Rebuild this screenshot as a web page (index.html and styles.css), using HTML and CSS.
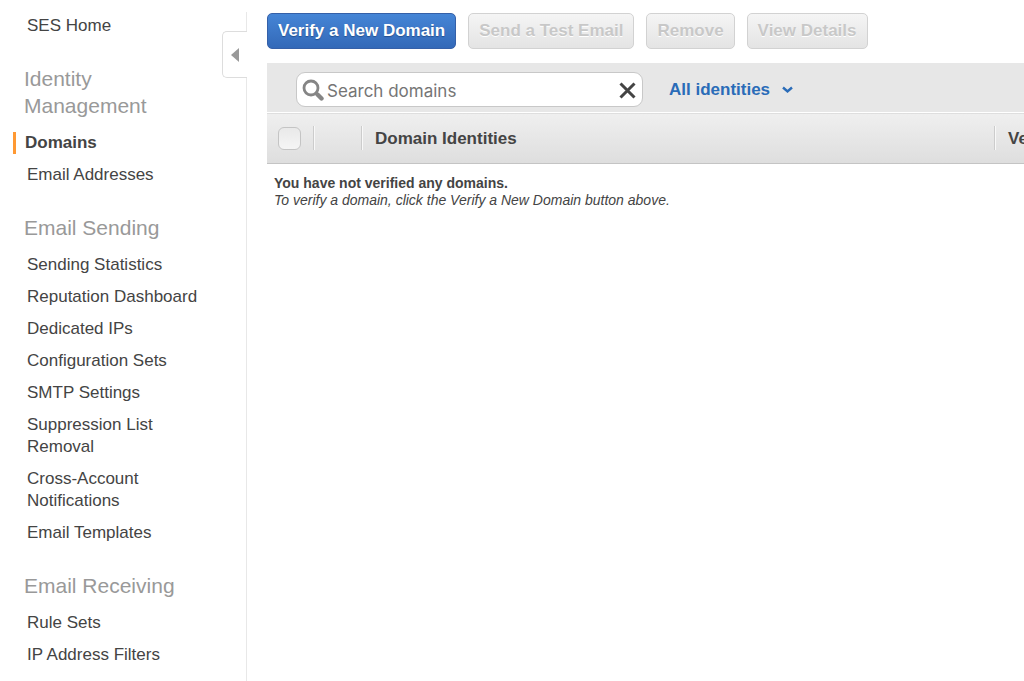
FILE: index.html
```html
<!DOCTYPE html>
<html lang="en">
<head>
  <meta charset="utf-8">
  <meta name="viewport" content="width=device-width, initial-scale=1">
  <title>SES Home</title>
  <link rel="stylesheet" href="styles.css">
</head>
<body>
  <div class="layout">
    <aside class="sidebar">
      <nav class="nav">
        <ul class="nav-list">
          <li><a class="nav-link" href="#">SES Home</a></li>
        </ul>
        <h2 class="nav-heading">Identity Management</h2>
        <ul class="nav-list">
          <li><a class="nav-link nav-link-active" href="#" aria-current="page">Domains</a></li>
          <li><a class="nav-link" href="#">Email Addresses</a></li>
        </ul>
        <h2 class="nav-heading">Email Sending</h2>
        <ul class="nav-list">
          <li><a class="nav-link" href="#">Sending Statistics</a></li>
          <li><a class="nav-link" href="#">Reputation Dashboard</a></li>
          <li><a class="nav-link" href="#">Dedicated IPs</a></li>
          <li><a class="nav-link" href="#">Configuration Sets</a></li>
          <li><a class="nav-link" href="#">SMTP Settings</a></li>
          <li><a class="nav-link" href="#">Suppression List Removal</a></li>
          <li><a class="nav-link" href="#">Cross-Account Notifications</a></li>
          <li><a class="nav-link" href="#">Email Templates</a></li>
        </ul>
        <h2 class="nav-heading">Email Receiving</h2>
        <ul class="nav-list">
          <li><a class="nav-link" href="#">Rule Sets</a></li>
          <li><a class="nav-link" href="#">IP Address Filters</a></li>
        </ul>
      </nav>
      <div class="sidebar-edge">
        <button class="collapse" type="button" aria-label="Collapse navigation">
          <svg width="8" height="14" viewBox="0 0 8 14" aria-hidden="true"><path d="M8 0v14L0 7z" fill="#999"/></svg>
        </button>
      </div>
    </aside>

    <main class="main">
      <div class="actions">
        <button class="button button-primary" type="button">Verify a New Domain</button>
        <button class="button" type="button" disabled>Send a Test Email</button>
        <button class="button" type="button" disabled>Remove</button>
        <button class="button" type="button" disabled>View Details</button>
      </div>

      <div class="filters">
        <div class="search">
          <svg width="22" height="22" viewBox="0 0 22 22" fill="none" stroke="#858585" aria-hidden="true">
            <circle cx="9" cy="9" r="7" stroke-width="2.8"/>
            <path d="M13.5 13.5l2 2" stroke-width="3"/>
            <path d="M15.5 15.5l4 4" stroke-width="4.4" stroke-linecap="round"/>
          </svg>
          <input class="search-input" type="text" placeholder="Search domains" aria-label="Search domains">
          <button class="search-clear" type="button" aria-label="Clear search">
            <svg width="17" height="17" viewBox="0 0 17 17" fill="none" stroke="#444" stroke-width="3" aria-hidden="true"><path d="M1.5 1.5l14 14M15.5 1.5l-14 14"/></svg>
          </button>
        </div>
        <label class="filter">
          <select class="filter-select" aria-label="Identity filter">
            <option>All identities</option>
          </select>
          <svg width="11" height="8" viewBox="0 0 11 8" fill="none" stroke="#2a6cb8" stroke-width="2.4" aria-hidden="true"><path d="M1 1.5l4.5 4 4.5-4"/></svg>
        </label>
      </div>

      <table class="table">
        <colgroup>
          <col class="col-select">
          <col class="col-icon">
          <col>
          <col class="col-status">
        </colgroup>
        <thead>
          <tr>
            <th><input class="checkbox" type="checkbox" aria-label="Select all"></th>
            <th></th>
            <th>Domain Identities</th>
            <th>Ve</th>
          </tr>
        </thead>
        <tbody>
          <tr>
            <td colspan="4">
              <strong class="empty-title">You have not verified any domains.</strong>
              <em class="empty-hint">To verify a domain, click the Verify a New Domain button above.</em>
            </td>
          </tr>
        </tbody>
      </table>
    </main>
  </div>
</body>
</html>
```
FILE: styles.css
```css
* {
  box-sizing: border-box;
}

body {
  margin: 0;
  background: #fff;
  color: #444;
  font-family: "Liberation Sans", Arial, sans-serif;
  font-size: 17px;
}

button,
input,
select {
  font: inherit;
}

.layout {
  display: flex;
  min-height: 100vh;
}

/* Sidebar */

.sidebar {
  display: flex;
  flex: none;
  width: 247px;
}

.nav {
  flex: 1;
  padding: 10px 0 10px 13px;
}

.nav-list {
  display: flex;
  flex-direction: column;
  margin: 0;
  padding: 0;
  list-style: none;
}

.nav-link {
  display: block;
  max-width: 190px;
  padding: 5px 0 5px 14px;
  color: #444;
  line-height: 22px;
  text-decoration: none;
}

.nav-link-active {
  padding: 0 0 0 9px;
  margin: 5px 0;
  border-left: 3px solid #f93;
  font-weight: bold;
}

.nav-heading {
  max-width: 170px;
  margin: 23px 0 8px;
  padding-left: 11px;
  color: #999;
  font-size: 21px;
  font-weight: normal;
  line-height: 27px;
}

.sidebar-edge {
  position: relative;
  width: 1px;
  margin-top: 12px;
  background: #e8e8e8;
}

.collapse {
  position: absolute;
  top: 19px;
  right: 0;
  display: flex;
  align-items: center;
  justify-content: center;
  width: 25px;
  height: 47px;
  padding: 0;
  border: 1px solid #ddd;
  border-right: 0;
  border-radius: 5px 0 0 5px;
  background: #fff;
}

/* Main */

.main {
  flex: 1;
  min-width: 0;
  padding: 13px 0 0 20px;
}

.actions {
  display: flex;
  gap: 12px;
  margin-bottom: 14px;
}

.button {
  height: 36px;
  padding: 0 10px;
  border: 1px solid #d2d2d2;
  border-radius: 5px;
  background: linear-gradient(#f5f5f5, #e4e4e4);
  color: #c8c8c8;
  font-weight: bold;
  text-shadow: 0 1px 0 #fff;
  white-space: nowrap;
}

.button-primary {
  border-color: #3560a8;
  background: linear-gradient(#4585d6, #3369b8);
  color: #fff;
  text-shadow: 0 1px 1px #24508f;
}

.filters {
  display: flex;
  align-items: center;
  gap: 26px;
  height: 49px;
  padding: 4px 0 0 29px;
  background: #e7e7e7;
}

.search {
  display: flex;
  align-items: center;
  gap: 3px;
  width: 347px;
  height: 35px;
  padding: 1px 6px 0 5px;
  border: 1px solid #c8c8c8;
  border-radius: 9px;
  background: #fff;
}

.search-input {
  flex: 1;
  min-width: 0;
  padding: 2px 0 0;
  border: 0;
  outline: 0;
  background: none;
  color: #444;
  font-family: Inter, "Liberation Sans", sans-serif;
}

.search-input::placeholder {
  color: #757575;
  opacity: 1;
}

.search-clear {
  display: flex;
  padding: 0;
  border: 0;
  background: none;
}

.filter {
  display: flex;
  align-items: center;
  gap: 11px;
  color: #2a6cb8;
}

.filter-select {
  padding: 0;
  border: 0;
  appearance: none;
  background: none;
  color: inherit;
  font-weight: bold;
}

/* Table */

.table {
  width: 100%;
  border-collapse: collapse;
  table-layout: fixed;
}

.col-select {
  width: 46px;
}

.col-icon {
  width: 48px;
}

.col-status {
  width: 30px;
}

.table thead tr {
  border-top: 1px solid #fff;
  border-bottom: 1px solid #c4c4c4;
  background: linear-gradient(#efefef, #dedede);
}

.table th {
  height: 51px;
  padding: 1px 0 0 14px;
  overflow: hidden;
  text-align: left;
}

.table th + th {
  background: linear-gradient(90deg, #ccc 50%, #f8f8f8 50%) left center / 2px 24px no-repeat;
}

.table th:first-child {
  padding-left: 11px;
}

.checkbox {
  display: block;
  width: 23px;
  height: 23px;
  margin: 0;
  border: 1px solid #c4c4c4;
  border-radius: 6px;
  appearance: none;
  background: linear-gradient(#e9e9e9, #f5f5f5);
}

.table td {
  padding: 11px 7px;
  font-size: 14px;
  line-height: 17px;
}

.empty-title,
.empty-hint {
  display: block;
}
```
